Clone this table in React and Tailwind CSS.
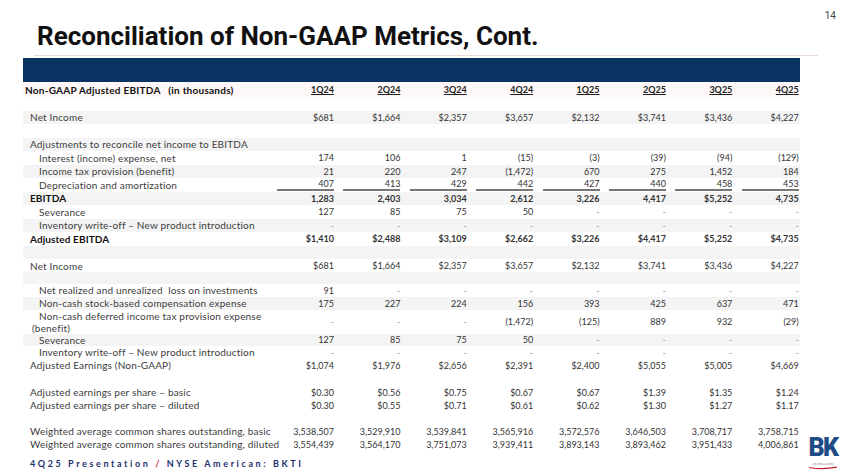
import React from 'react'

const cols = ['1Q24', '2Q24', '3Q24', '4Q24', '1Q25', '2Q25', '3Q25', '4Q25']

const netIncome = ['$681', '$1,664', '$2,357', '$3,657', '$2,132', '$3,741', '$3,436', '$4,227']
const dash = ['-', '-', '-', '-', '-', '-', '-', '-']
const severance = ['127', '85', '75', '50', '-', '-', '-', '-']

const rows = [
  { h: 'h-[13.5px]' },
  { label: 'Net Income', vals: netIncome, ind: 1, h: 'h-[13.5px]', s: true },
  { h: 'h-[13.5px]' },
  { label: 'Adjustments to reconcile net income to EBITDA', ind: 1, h: 'h-[13.5px]', s: true },
  { label: 'Interest (income) expense, net', vals: ['174', '106', '1', '(15)', '(3)', '(39)', '(94)', '(129)'], ind: 2, h: 'h-[13.5px]' },
  { label: 'Income tax provision (benefit)', vals: ['21', '220', '247', '(1,472)', '670', '275', '1,452', '184'], ind: 2, h: 'h-[13.5px]', s: true },
  { label: 'Depreciation and amortization', vals: ['407', '413', '429', '442', '427', '440', '458', '453'], ind: 2, h: 'h-[13.5px]', under: true },
  { label: 'EBITDA', vals: ['1,283', '2,403', '3,034', '2,612', '3,226', '4,417', '$5,252', '4,735'], ind: 1, h: 'h-[13.5px]', s: true, bold: true },
  { label: 'Severance', vals: severance, ind: 2, h: 'h-[13.5px]' },
  { label: 'Inventory write-off – New product introduction', vals: dash, ind: 2, h: 'h-[13.5px]', s: true },
  { label: 'Adjusted EBITDA', vals: ['$1,410', '$2,488', '$3,109', '$2,662', '$3,226', '$4,417', '$5,252', '$4,735'], ind: 1, h: 'h-[13.5px]', bold: true },
  { h: 'h-[13.5px]', s: true },
  { label: 'Net Income', vals: netIncome, ind: 1, h: 'h-[13px]' },
  { h: 'h-[11.5px]', s: true },
  { label: 'Net realized and unrealized  loss on investments', vals: ['91', '-', '-', '-', '-', '-', '-', '-'], ind: 2, h: 'h-[13px]' },
  { label: 'Non-cash stock-based compensation expense', vals: ['175', '227', '224', '156', '393', '425', '637', '471'], ind: 2, h: 'h-[13px]', s: true },
  { label: 'Non-cash deferred income tax provision expense', label2: '(benefit)', vals: ['-', '-', '-', '(1,472)', '(125)', '889', '932', '(29)'], ind: 2, h: 'h-[24px]' },
  { label: 'Severance', vals: severance, ind: 2, h: 'h-[12px]', s: true },
  { label: 'Inventory write-off – New product introduction', vals: dash, ind: 2, h: 'h-[13px]' },
  { label: 'Adjusted Earnings (Non-GAAP)', vals: ['$1,074', '$1,976', '$2,656', '$2,391', '$2,400', '$5,055', '$5,005', '$4,669'], ind: 1, h: 'h-[13px]' },
  { h: 'h-[14px]' },
  { label: 'Adjusted earnings per share – basic', vals: ['$0.30', '$0.56', '$0.75', '$0.67', '$0.67', '$1.39', '$1.35', '$1.24'], ind: 1, h: 'h-[13px]' },
  { label: 'Adjusted earnings per share – diluted', vals: ['$0.30', '$0.55', '$0.71', '$0.61', '$0.62', '$1.30', '$1.27', '$1.17'], ind: 1, h: 'h-[13px]' },
  { h: 'h-[13px]' },
  { label: 'Weighted average common shares outstanding, basic', vals: ['3,538,507', '3,529,910', '3,539,841', '3,565,916', '3,572,576', '3,646,503', '3,708,717', '3,758,715'], ind: 1, h: 'h-[13px]' },
  { label: 'Weighted average common shares outstanding, diluted', vals: ['3,554,439', '3,564,170', '3,751,073', '3,939,411', '3,893,143', '3,893,462', '3,951,433', '4,006,861'], ind: 1, h: 'h-[13px]' },
]

const grid = 'grid grid-cols-[244.6px_repeat(8,66.4px)] items-center'

const Row = ({ r }) => {
  const pad = r.ind === 2 ? 'pl-[16px]' : 'pl-[7px]'
  return (
    <div className={`${grid} ${r.h} ${r.s ? 'bg-[#f4f4f4]' : ''}`}>
      <div className="whitespace-pre text-[10px] leading-[12px] tracking-[0.18px] text-[#3c3c3c] font-['Lato',sans-serif]">
        {r.label && (
          <div className={`${pad} ${r.bold ? 'font-bold text-[#111] tracking-[0.1px]' : ''}`}>{r.label}</div>
        )}
        {r.label2 && <div className="pl-[9px]">{r.label2}</div>}
      </div>
      {r.vals &&
        r.vals.map((v, i) => (
          <div key={i} className="flex justify-end">
            <div
              className={`text-right text-[9px] leading-[11px] font-['Lato',sans-serif] ${
                v === '-' ? 'text-[#9a9a9a]' : 'text-[#333]'
              } ${r.bold ? 'font-bold text-[#111]' : ''} ${
                r.under ? 'w-[57px] border-b-2 border-[#777]' : ''
              }`}
            >
              {v}
            </div>
          </div>
        ))}
    </div>
  )
}

const Logo = () => (
  <div className="flex flex-col items-center w-[36px]">
    <div className="h-[22px] flex items-center text-[25px] leading-[22px] font-black tracking-[-1.5px] text-[#1f4c86] font-['Roboto',sans-serif]">
      BK
    </div>
    <div className="mt-[4px] h-[3px] w-[28px] flex items-center justify-center overflow-hidden text-[3px] leading-[3px] text-[#888] font-['Roboto',sans-serif]">
      TECHNOLOGIES
    </div>
    <svg width="30" height="4" viewBox="0 0 30 4">
      <path d="M1 1.5 Q15 4 29 1.2" stroke="#c8202f" strokeWidth="1.2" fill="none" />
    </svg>
  </div>
)

export default function App() {
  return (
    <div className="w-[845px] h-[475px] bg-white overflow-hidden flex flex-col">
      <div className="flex justify-between items-start h-[55px]">
        <h1 className="ml-[37px] mt-[22px] text-[26px] leading-[28px] font-bold text-[#111] font-['Roboto',sans-serif]">
          Reconciliation of Non-GAAP Metrics, Cont.
        </h1>
        <div className="mr-[9px] mt-[10px] text-[10px] leading-[12px] text-[#444] font-['Roboto',sans-serif]">14</div>
      </div>
      <div className="ml-[34px] w-[784px] h-px bg-[#e9d9d9]" />
      <div className="flex">
        <div className="ml-[23px] w-[777px] flex flex-col">
          <div className="mt-[2px] h-[24px] bg-[#0c3462]" />
          <div className={`${grid} h-[15px] bg-[#fdf7f7]`}>
            <div className="pl-[2px] whitespace-pre text-[10px] leading-[12px] tracking-[0.25px] font-bold text-[#111] font-['Lato',sans-serif]">
              {'Non-GAAP Adjusted EBITDA   (in thousands)'}
            </div>
            {cols.map((c) => (
              <div key={c} className="text-right text-[9px] leading-[11px] font-bold underline text-[#222] font-['Lato',sans-serif]">
                {c}
              </div>
            ))}
          </div>
          {rows.map((r, i) => (
            <Row key={i} r={r} />
          ))}
          <div className="mt-[6px] h-[14px] pl-[7px] flex items-center text-[9px] font-bold tracking-[2.6px] text-[#1d2f6c] font-['Lato',sans-serif] whitespace-pre">
            4Q25 Presentation <span className="text-[#c8202f]">/</span> NYSE American: BKTI
          </div>
        </div>
        <div className="self-end ml-[5px] mb-[1px]">
          <Logo />
        </div>
      </div>
    </div>
  )
}
